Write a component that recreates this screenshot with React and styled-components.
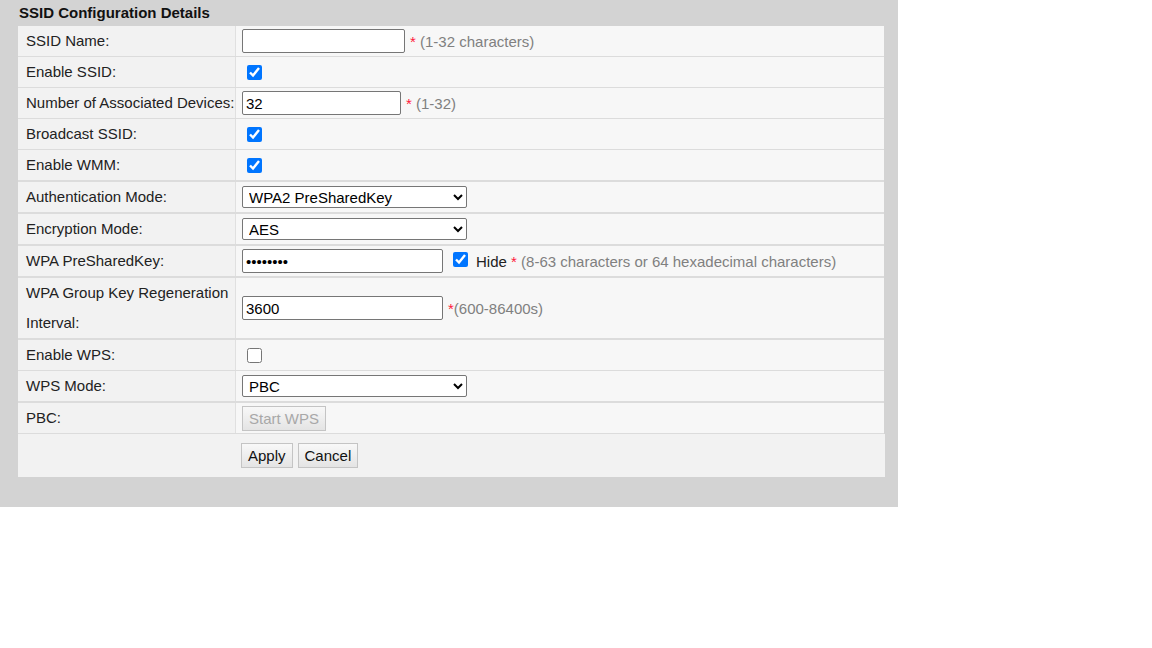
import React from "react";
import styled, { createGlobalStyle } from "styled-components";

const GlobalStyle = createGlobalStyle`
  body {
    margin: 0;
    background: #fff;
    font-family: "Liberation Sans", Arial, sans-serif;
    font-size: 15px;
  }
`;

const Panel = styled.div`
  width: 898px;
  box-sizing: border-box;
  background: #d3d3d3;
  padding: 0 13px 30px 18px;
`;

const Title = styled.div`
  height: 26px;
  line-height: 26px;
  padding-left: 1px;
  font-weight: bold;
  color: #111;
`;

const Table = styled.div`
  width: 866px;
`;

const Row = styled.div`
  display: grid;
  grid-template-columns: 218px 1fr;
  border-bottom: ${(p) => p.$sep || 1}px solid #dcdcdc;
`;

const Label = styled.div`
  background: #f2f2f2;
  border-right: 1px solid #e0e0e0;
  padding: 0 0 0 8px;
  line-height: 30px;
  color: #222;
  display: flex;
  align-items: center;
`;

const Value = styled.div`
  background: #f7f7f7;
  padding: 0 6px;
  min-height: 30px;
  display: flex;
  align-items: center;
  gap: 5px;
  color: #222;
`;

const TextInput = styled.input`
  box-sizing: border-box;
  width: ${(p) => p.$w}px;
  height: 24px;
  border: 1px solid #767676;
  border-radius: 2px;
  padding: 1px 3px;
  font: 15px "Liberation Sans", Arial, sans-serif;
  color: #000;
  background: #fff;
  margin: 0;
`;

const Select = styled.select`
  box-sizing: border-box;
  width: 225px;
  height: 22px;
  border: 1px solid #767676;
  border-radius: 2px;
  padding: 0 2px;
  font: 15px "Liberation Sans", Arial, sans-serif;
  color: #000;
  background: #fff;
  margin: 0;
`;

const Check = styled.input.attrs({ type: "checkbox" })`
  width: 15px;
  height: 15px;
  margin: ${(p) => (p.$raise ? "0 3px 4px 5px" : "0 0 0 5px")};
`;

const Hint = styled.span`
  color: #808080;
  white-space: nowrap;
`;

const Star = styled.span`
  color: #ff1a3c;
`;

const Dark = styled.span`
  color: #222;
`;

const Button = styled.button`
  height: 25px;
  padding: 0 6px;
  border: 1px solid #c4c4c4;
  border-radius: 0;
  background: linear-gradient(#f8f8f8, #e4e4e4);
  font: 15px "Liberation Sans", Arial, sans-serif;
  color: ${(p) => (p.disabled ? "#a8a8a8" : "#111")};
  margin: 0;
`;

const ButtonRow = styled.div`
  background: #f2f2f2;
  width: 867px;
  height: 43px;
  box-sizing: border-box;
  padding-left: 223px;
  display: flex;
  align-items: center;
  gap: 5px;
`;

const Note = ({ children, tight }) => (
  <Hint>
    <Star>*</Star>
    {tight ? "" : " "}
    {children}
  </Hint>
);

export default function App() {
  return (
    <>
      <GlobalStyle />
      <Panel>
        <Title>SSID Configuration Details</Title>
        <Table>
          <Row>
            <Label>SSID Name:</Label>
            <Value>
              <TextInput $w={163} defaultValue="" />
              <Note>(1-32 characters)</Note>
            </Value>
          </Row>
          <Row>
            <Label>Enable SSID:</Label>
            <Value>
              <Check defaultChecked />
            </Value>
          </Row>
          <Row>
            <Label>Number of Associated Devices:</Label>
            <Value>
              <TextInput $w={159} defaultValue="32" />
              <Note>(1-32)</Note>
            </Value>
          </Row>
          <Row>
            <Label>Broadcast SSID:</Label>
            <Value>
              <Check defaultChecked />
            </Value>
          </Row>
          <Row $sep={2}>
            <Label>Enable WMM:</Label>
            <Value>
              <Check defaultChecked />
            </Value>
          </Row>
          <Row $sep={2}>
            <Label>Authentication Mode:</Label>
            <Value>
              <Select defaultValue="wpa2psk">
                <option value="open">Open</option>
                <option value="wpapsk">WPA PreSharedKey</option>
                <option value="wpa2psk">WPA2 PreSharedKey</option>
              </Select>
            </Value>
          </Row>
          <Row $sep={2}>
            <Label>Encryption Mode:</Label>
            <Value>
              <Select defaultValue="aes">
                <option value="aes">AES</option>
                <option value="tkip">TKIP</option>
              </Select>
            </Value>
          </Row>
          <Row $sep={2}>
            <Label>WPA PreSharedKey:</Label>
            <Value>
              <TextInput $w={201} type="password" defaultValue="12345678" />
              <Check $raise defaultChecked />
              <Hint>
                <Dark>Hide</Dark> <Star>*</Star> (8-63 characters or 64
                hexadecimal characters)
              </Hint>
            </Value>
          </Row>
          <Row $sep={2}>
            <Label>WPA Group Key Regeneration Interval:</Label>
            <Value>
              <TextInput $w={201} defaultValue="3600" />
              <Note tight>(600-86400s)</Note>
            </Value>
          </Row>
          <Row>
            <Label>Enable WPS:</Label>
            <Value>
              <Check />
            </Value>
          </Row>
          <Row $sep={2}>
            <Label>WPS Mode:</Label>
            <Value>
              <Select defaultValue="pbc">
                <option value="pbc">PBC</option>
                <option value="pin">PIN</option>
              </Select>
            </Value>
          </Row>
          <Row>
            <Label>PBC:</Label>
            <Value>
              <Button disabled>Start WPS</Button>
            </Value>
          </Row>
          <ButtonRow>
            <Button>Apply</Button>
            <Button>Cancel</Button>
          </ButtonRow>
        </Table>
      </Panel>
    </>
  );
}
